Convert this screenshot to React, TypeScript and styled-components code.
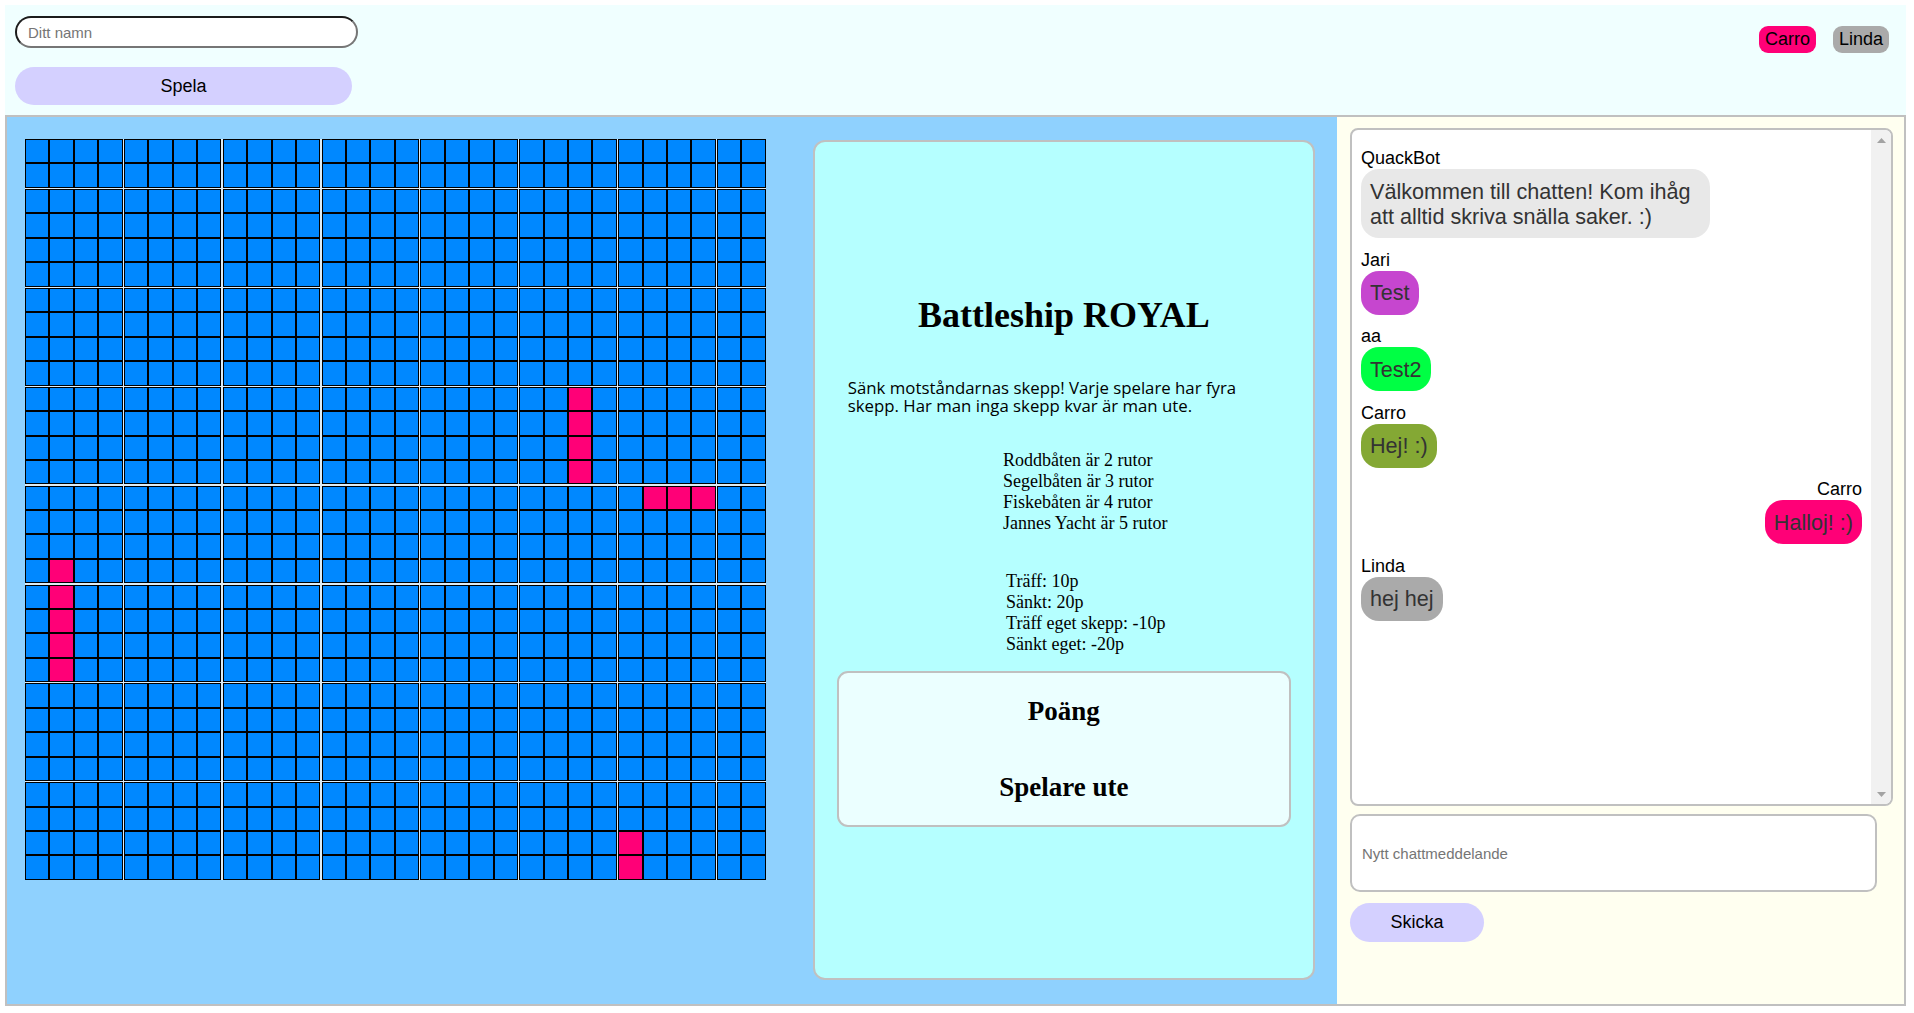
import React from 'react';
import styled, { createGlobalStyle } from 'styled-components';

const GlobalStyle = createGlobalStyle`
  html, body { margin: 0; padding: 0; background: #ffffff; }
  body { font-family: "Liberation Sans", Arial, sans-serif; color: #000; }
  *, *::before, *::after { box-sizing: border-box; }
`;

const Page = styled.div`
  padding: 5px 8px 0 5px;
`;

const Header = styled.header`
  display: flex;
  justify-content: space-between;
  align-items: flex-start;
  height: 110px;
  background: #f0ffff;
  padding: 11px 17px 0 10px;
`;

const LoginColumn = styled.div`
  display: flex;
  flex-direction: column;
  gap: 19px;
`;

const NameInput = styled.input`
  width: 343px;
  height: 32px;
  border-radius: 16px;
  border: 2px solid;
  border-color: #1c1c1c #767676 #767676 #1c1c1c;
  padding: 0 11px;
  font: 15px "Liberation Sans", Arial, sans-serif;
  background: #fff;
  outline: none;
  &::placeholder { color: #757575; }
`;

const PillButton = styled.button<{ $w: number; $h: number }>`
  width: ${p => p.$w}px;
  height: ${p => p.$h}px;
  border: none;
  border-radius: 20px;
  background: #d4d0ff;
  font: 18px "Liberation Sans", Arial, sans-serif;
  color: #000;
  padding: 0;
  cursor: pointer;
`;

const BadgeRow = styled.div`
  display: flex;
  gap: 17px;
  margin-top: 10px;
`;

const Badge = styled.span<{ $bg: string }>`
  display: inline-block;
  height: 27px;
  line-height: 27px;
  padding: 0 6px;
  border-radius: 9px;
  background: ${p => p.$bg};
  font-size: 18px;
`;

const Main = styled.main`
  display: flex;
  height: 891px;
  border: 2px solid #c0c0c0;
`;

const GamePanel = styled.section`
  flex: 1;
  display: flex;
  align-items: flex-start;
  gap: 47px;
  background: #8fd1fe;
  padding: 22px 22px 24px 18px;
`;

const Board = styled.div`
  display: flex;
  flex-direction: column;
  background: #dcecf6;
`;

const BoardRow = styled.div<{ $gap: boolean }>`
  display: flex;
  margin-bottom: ${p => (p.$gap ? '1.3px' : '0')};
`;

const Cell = styled.div<{ $ship: boolean; $gap: boolean }>`
  width: 24.4px;
  height: 24.4px;
  border: 1px solid #000;
  background: ${p => (p.$ship ? '#ff0077' : '#0088ff')};
  margin-right: ${p => (p.$gap ? '1.3px' : '0')};
`;

const InfoCard = styled.section`
  flex: 0 0 502px;
  align-self: stretch;
  margin-top: 1px;
  display: flex;
  flex-direction: column;
  align-items: center;
  background: #b5ffff;
  border: 2px solid #c0c0c0;
  border-radius: 12px;
  padding: 153px 22px 0;
`;

const Title = styled.h1`
  margin: 0;
  font: 700 36px/40px "Liberation Serif", "Times New Roman", serif;
`;

const Intro = styled.p`
  align-self: flex-start;
  width: 400px;
  margin: 44px 0 0 11px;
  font: 16.8px/18px "Open Sans", "Noto Sans", sans-serif;
`;

const RuleList = styled.ul<{ $top: number; $shift: number }>`
  list-style: none;
  margin: ${p => p.$top}px 0 0 ${p => p.$shift}px;
  padding: 0 0 0 40px;
  font: 18px/21px "Liberation Serif", "Times New Roman", serif;
`;

const ScoreBox = styled.div`
  align-self: stretch;
  margin-top: 16.5px;
  display: flex;
  flex-direction: column;
  align-items: center;
  gap: 45px;
  background: #ebffff;
  border: 2px solid #c0c0c0;
  border-radius: 11px;
  padding: 23px 0 22px;
`;

const ScoreHeading = styled.h2`
  margin: 0;
  font: 700 27px/31px "Liberation Serif", "Times New Roman", serif;
`;

const ChatPanel = styled.aside`
  flex: 0 0 567px;
  display: flex;
  flex-direction: column;
  align-items: flex-start;
  background: #fffff0;
  padding: 11px 11px 0 13px;
`;

const ChatLog = styled.div`
  display: flex;
  width: 543px;
  height: 678px;
  background: #fff;
  border: 2px solid #c0c0c0;
  border-radius: 8px;
  overflow: hidden;
`;

const MessageList = styled.div`
  flex: 1;
  display: flex;
  flex-direction: column;
  padding: 17px 9px 0;
`;

const Message = styled.div<{ $mine: boolean }>`
  display: flex;
  flex-direction: column;
  align-items: ${p => (p.$mine ? 'flex-end' : 'flex-start')};
  margin-bottom: 10.5px;
`;

const Sender = styled.div`
  font-size: 18px;
  line-height: 22px;
`;

const Bubble = styled.div<{ $bg: string }>`
  max-width: 349px;
  padding: 9.5px 9px;
  border-radius: 18px;
  background: ${p => p.$bg};
  color: #333;
  font-size: 21.6px;
  line-height: 25px;
`;

const ScrollTrack = styled.div`
  flex: 0 0 20px;
  display: flex;
  flex-direction: column;
  justify-content: space-between;
  background: #f1f1f1;
`;

const ScrollArrow = styled.div`
  height: 20px;
  display: flex;
  align-items: center;
  justify-content: center;
`;

const ChatInput = styled.input`
  width: 527px;
  height: 78px;
  margin-top: 8px;
  border: 2px solid #c0c0c0;
  border-radius: 10px;
  padding: 0 10px;
  font: 15px "Liberation Sans", Arial, sans-serif;
  background: #fff;
  outline: none;
  &::placeholder { color: #757575; }
`;

const SendRow = styled.div`
  margin-top: 11px;
`;

const ships = new Set<string>();
[10, 11, 12, 13].forEach(r => ships.add(`${r}-22`));
[25, 26, 27].forEach(c => ships.add(`14-${c}`));
[17, 18, 19, 20, 21].forEach(r => ships.add(`${r}-1`));
[28, 29].forEach(r => ships.add(`${r}-24`));

const rows = Array.from({ length: 30 }, (_, i) => i);

const messages = [
  { from: 'QuackBot', text: 'Välkommen till chatten! Kom ihåg att alltid skriva snälla saker. :)', bg: '#e8e8e8', mine: false },
  { from: 'Jari', text: 'Test', bg: '#c646cf', mine: false },
  { from: 'aa', text: 'Test2', bg: '#00ff44', mine: false },
  { from: 'Carro', text: 'Hej! :)', bg: '#84a834', mine: false },
  { from: 'Carro', text: 'Halloj! :)', bg: '#ff0077', mine: true },
  { from: 'Linda', text: 'hej hej', bg: '#aaaaaa', mine: false },
];

const Arrow = ({ up }: { up: boolean }) => (
  <svg width="9" height="5" viewBox="0 0 9 5">
    <path d={up ? 'M0 5 L4.5 0 L9 5 Z' : 'M0 0 L4.5 5 L9 0 Z'} fill="#a3a3a3" />
  </svg>
);

export default function App() {
  return (
    <>
      <GlobalStyle />
      <Page>
        <Header>
          <LoginColumn>
            <NameInput placeholder="Ditt namn" />
            <PillButton $w={337} $h={38}>Spela</PillButton>
          </LoginColumn>
          <BadgeRow>
            <Badge $bg="#ff0077">Carro</Badge>
            <Badge $bg="#aaaaaa">Linda</Badge>
          </BadgeRow>
        </Header>
        <Main>
          <GamePanel>
            <Board>
              {rows.map(r => (
                <BoardRow key={r} $gap={r % 4 === 1 && r < 29}>
                  {rows.map(c => (
                    <Cell key={c} $ship={ships.has(`${r}-${c}`)} $gap={c % 4 === 3 && c < 29} />
                  ))}
                </BoardRow>
              ))}
            </Board>
            <InfoCard>
              <Title>Battleship ROYAL</Title>
              <Intro>Sänk motståndarnas skepp! Varje spelare har fyra skepp. Har man inga skepp kvar är man ute.</Intro>
              <RuleList $top={34.5} $shift={3}>
                <li>Roddbåten är 2 rutor</li>
                <li>Segelbåten är 3 rutor</li>
                <li>Fiskebåten är 4 rutor</li>
                <li>Jannes Yacht är 5 rutor</li>
              </RuleList>
              <RuleList $top={37} $shift={4}>
                <li>Träff: 10p</li>
                <li>Sänkt: 20p</li>
                <li>Träff eget skepp: -10p</li>
                <li>Sänkt eget: -20p</li>
              </RuleList>
              <ScoreBox>
                <ScoreHeading>Poäng</ScoreHeading>
                <ScoreHeading>Spelare ute</ScoreHeading>
              </ScoreBox>
            </InfoCard>
          </GamePanel>
          <ChatPanel>
            <ChatLog>
              <MessageList>
                {messages.map((m, i) => (
                  <Message key={i} $mine={m.mine}>
                    <Sender>{m.from}</Sender>
                    <Bubble $bg={m.bg}>{m.text}</Bubble>
                  </Message>
                ))}
              </MessageList>
              <ScrollTrack>
                <ScrollArrow><Arrow up /></ScrollArrow>
                <ScrollArrow><Arrow up={false} /></ScrollArrow>
              </ScrollTrack>
            </ChatLog>
            <ChatInput placeholder="Nytt chattmeddelande" />
            <SendRow>
              <PillButton $w={134} $h={39}>Skicka</PillButton>
            </SendRow>
          </ChatPanel>
        </Main>
      </Page>
    </>
  );
}
